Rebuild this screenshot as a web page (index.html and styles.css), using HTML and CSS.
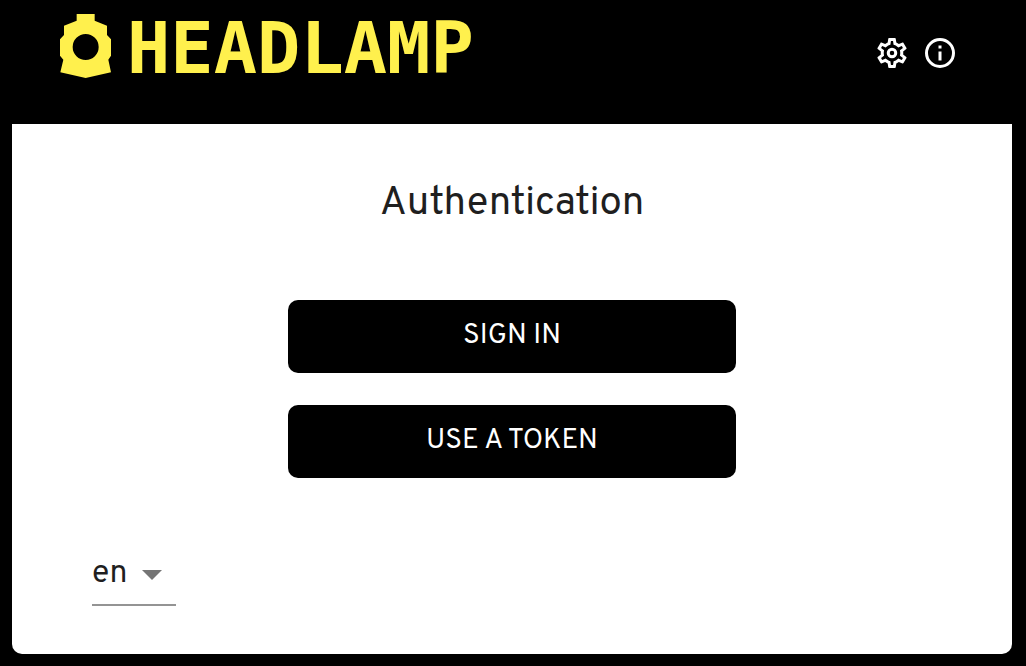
FILE: index.html
```
<!DOCTYPE html>
<html lang="en">
<head>
  <meta charset="utf-8">
  <meta name="viewport" content="width=device-width, initial-scale=1">
  <title>Headlamp</title>
  <link rel="stylesheet" href="styles.css">
</head>
<body>
  <div class="dialog">
    <header class="header">
      <div class="brand">
        <svg class="brand-lamp" viewBox="30 27 153 192" aria-hidden="true">
          <path fill-rule="evenodd" d="M80 27H134V47L171 62V90L183 103V152L175 164L183 202L107 219L31 202L40 164L30 152V103L42 90V62L80 47ZM107 87A39 39 0 1 0 107 165A39 39 0 1 0 107 87Z"/>
        </svg>
        <span class="brand-name">HEADLAMP</span>
      </div>
      <div class="actions">
        <button class="icon-button" type="button" aria-label="Settings">
          <svg class="icon" viewBox="0 0 24 24" aria-hidden="true">
            <path class="icon-fill" fill-rule="evenodd" d="M19.43 12.98c.04-.32.07-.64.07-.98 0-.34-.03-.66-.07-.98l2.11-1.65c.19-.15.24-.42.12-.64l-2-3.46c-.09-.16-.26-.25-.44-.25-.06 0-.12.01-.17.03l-2.49 1c-.52-.4-1.08-.73-1.69-.98l-.38-2.65C14.46 2.18 14.25 2 14 2h-4c-.25 0-.46.18-.49.42l-.38 2.65c-.61.25-1.17.59-1.69.98l-2.49-1c-.06-.02-.12-.03-.18-.03-.17 0-.34.09-.43.25l-2 3.46c-.13.22-.07.49.12.64l2.11 1.65c-.04.32-.07.65-.07.98 0 .33.03.66.07.98l-2.11 1.65c-.19.15-.24.42-.12.64l2 3.46c.09.16.26.25.44.25.06 0 .12-.01.17-.03l2.49-1c.52.4 1.08.73 1.69.98l.38 2.65c.03.24.24.42.49.42h4c.25 0 .46-.18.49-.42l.38-2.65c.61-.25 1.17-.59 1.69-.98l2.49 1c.06.02.12.03.18.03.17 0 .34-.09.43-.25l2-3.46c.12-.22.07-.49-.12-.64l-2.11-1.65zm-1.98-1.71c.04.31.05.52.05.73 0 .21-.02.43-.05.73l-.14 1.13.89.7 1.08.84-.7 1.21-1.27-.51-1.04-.42-.9.68c-.43.32-.84.56-1.25.73l-1.06.43-.16 1.13-.2 1.35h-1.4l-.19-1.35-.16-1.13-1.06-.43c-.43-.18-.83-.41-1.23-.71l-.91-.7-1.06.43-1.27.51-.7-1.21 1.08-.84.89-.7-.14-1.13c-.03-.31-.05-.54-.05-.74s.02-.43.05-.73l.14-1.13-.89-.7-1.08-.84.7-1.21 1.27.51 1.04.42.9-.68c.43-.32.84-.56 1.25-.73l1.06-.43.16-1.13.2-1.35h1.39l.19 1.35.16 1.13 1.06.43c.43.18.83.41 1.23.71l.91.7 1.06-.43 1.27-.51.7 1.21-1.07.85-.89.7.14 1.13z"/>
            <circle class="icon-line" cx="12" cy="12" r="2.5"/>
          </svg>
        </button>
        <button class="icon-button" type="button" aria-label="About">
          <svg class="icon" viewBox="0 0 24 24" aria-hidden="true">
            <circle class="icon-line" cx="12" cy="12" r="9"/>
            <path class="icon-fill" d="M11 7h2v2h-2zM11 11h2v6h-2z"/>
          </svg>
        </button>
      </div>
    </header>
    <main class="card">
      <h1 class="title">Authentication</h1>
      <div class="choices">
        <button class="choice" type="button">SIGN IN</button>
        <button class="choice" type="button">USE A TOKEN</button>
      </div>
      <div class="language">
        <select class="language-select" aria-label="Language">
          <option selected>en</option>
        </select>
        <svg class="language-arrow" viewBox="0 0 20 10" aria-hidden="true"><path d="M0 0H20L10 10Z"/></svg>
      </div>
    </main>
  </div>
</body>
</html>
```
FILE: styles.css
```
* {
  box-sizing: border-box;
}

body {
  margin: 0;
  background: #000;
  color: #1f1f1f;
  font-family: Overpass, Roboto, "Liberation Sans", sans-serif;
}

.dialog {
  display: flex;
  flex-direction: column;
  min-height: 100vh;
  padding: 0 14px 12px 12px;
}

.header {
  display: flex;
  justify-content: space-between;
  align-items: flex-start;
  padding: 14px 48px 42px;
}

.brand {
  display: flex;
  align-items: flex-start;
  gap: 16px;
  color: #fff04d;
}

.brand-lamp {
  width: 51px;
  height: 64px;
  fill: currentColor;
}

.brand-name {
  font: bold 72px/68px "DejaVu Sans Mono", monospace;
}

.actions {
  display: flex;
  gap: 12px;
  padding: 21px 6px 0 0;
}

.icon-button {
  display: flex;
  padding: 0;
  border: 0;
  background: none;
  color: #fff;
  width: 36px;
  height: 36px;
}

.icon {
  width: 36px;
  height: 36px;
}

.icon-line {
  fill: none;
  stroke: currentColor;
  stroke-width: 2;
}

.icon-fill {
  fill: currentColor;
}

.card {
  flex: 1;
  display: flex;
  flex-direction: column;
  padding: 56px 80px 48px;
  background: #fff;
  border-radius: 0 0 10px 10px;
}

.title {
  margin: 0;
  font-size: 40px;
  line-height: 48px;
  font-weight: 400;
  text-align: center;
}

.choices {
  display: flex;
  flex-direction: column;
  align-items: center;
  gap: 32px;
  padding: 72px 0 74px;
}

.choice {
  width: 100%;
  max-width: 448px;
  padding: 18px 16px 19px;
  border: 0;
  border-radius: 10px;
  background: #000;
  color: #fff;
  font: 28px/36px Overpass, Roboto, "Liberation Sans", sans-serif;
}

.language {
  position: relative;
  width: 84px;
}

.language-select {
  appearance: none;
  width: 100%;
  padding: 4px 48px 12px 0;
  border: 0;
  border-bottom: 2px solid #949494;
  border-radius: 0;
  background: none;
  color: inherit;
  font: 32px/36px Overpass, Roboto, "Liberation Sans", sans-serif;
}

.language-arrow {
  position: absolute;
  top: 18px;
  right: 14px;
  width: 20px;
  height: 10px;
  fill: #757575;
  pointer-events: none;
}
```
